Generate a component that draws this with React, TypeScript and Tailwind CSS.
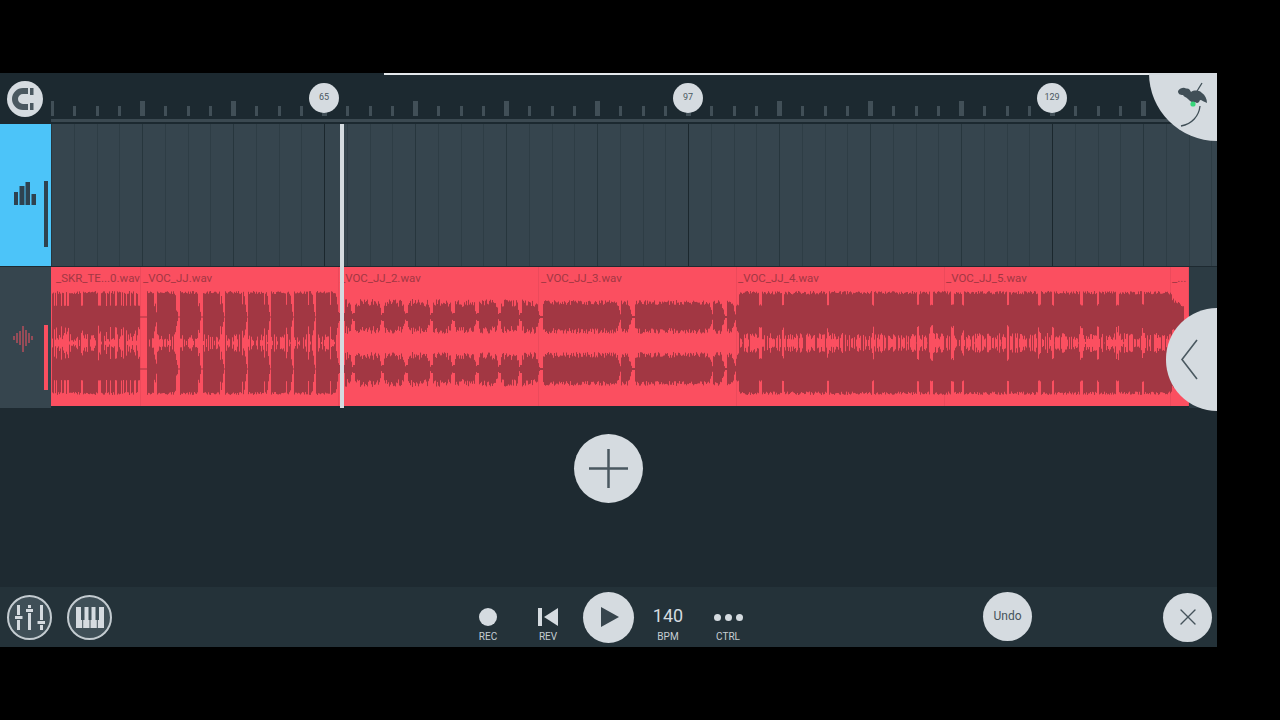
import { X } from 'lucide-react';

const CELLS = Array.from({ length: 52 }, (_, i) => i);
const BADGES: Record<number, string> = { 12: '65', 28: '97', 44: '129' };

const CLIPS = [
    { label: '_SKR_TE...0.wav', width: 'w-[90px]', pad: 'pl-[5px]' },
    { label: '_VOC_JJ.wav', width: 'w-[198px]', pad: 'pl-[2px]' },
    { label: '_VOC_JJ_2.wav', width: 'w-[200px]', pad: 'pl-[1px]' },
    { label: '_VOC_JJ_3.wav', width: 'w-[198px]', pad: 'pl-[2px]' },
    { label: '_VOC_JJ_4.wav', width: 'w-[208px]', pad: 'pl-[1px]' },
    { label: '_VOC_JJ_5.wav', width: 'w-[226px]', pad: 'pl-[1px]' },
    { label: '_...', width: 'w-[18px]', pad: 'pl-[1px]' },
];

function rand(n: number) {
    const s = Math.sin(n * 127.1 + 11.7) * 43758.5453;
    return s - Math.floor(s);
}

const BURSTS = [[147, 156], [157, 177], [180, 200], [203, 223], [225, 246], [248, 269], [271, 292], [294, 314], [316, 338]];
const SOFT = [[345, 352], [355, 381], [384, 405], [408, 430], [433, 452], [455, 476], [479, 498], [501, 519], [522, 539]];
const MID = [[543, 620], [621, 631], [635, 712], [713, 724], [727, 735]];

function inBurst(list: number[][], x: number, fade: number) {
    for (const [a, b] of list) {
        if (x >= a && x <= b) {
            return Math.min(1, (b - x) / fade + 0.2);
        }
    }
    return 0;
}

// one column of the waveform: [channel 1 top, ch1 bottom, ch2 top, ch2 bottom], in page y
function column(x: number) {
    const r = rand(x);
    const r2 = rand(x + 500);
    const spike = rand(x + 900) > 0.75 ? 9 : 0;
    let up = 0;
    let down = 0;
    if (x < 140) {
        const gate = r > 0.25 ? 1 : 0.5;
        up = (22 + r * 4) * gate;
        down = (17 + r2 * 8 + spike) * gate;
    } else if (x < 339) {
        const k = inBurst(BURSTS, x, 3);
        const gate = x % 22 < 1 ? 0.5 : 1;
        up = (23 + r * 3) * k * gate;
        down = (17 + r2 * 8 + spike) * k * gate;
        if (k === 0) { up = 0.5; down = 0.5; }
    } else if (x < 540) {
        const k = inBurst(SOFT, x, 3);
        up = (10 + r * 8) * k;
        down = (9 + r2 * 8) * k;
        if (k === 0) { up = 4; down = 4; }
    } else if (x < 736) {
        const k = inBurst(MID, x, 4);
        up = (12 + r * 5) * k;
        down = (11 + r2 * 6) * k;
        if (k === 0) { up = 1; down = 1; }
    } else if (x < 1172) {
        const gap = (x - 737) % 45 < 1.5 || rand(Math.floor(x / 3)) > 0.95;
        const k = gap ? 0.5 : 1;
        up = (22.5 + r * 3.5) * k;
        down = (16 + r2 * 7 + spike) * k;
    } else if (x < 1184) {
        up = 15 - (x - 1172) * 0.6 + r * 4;
        down = 12 - (x - 1172) * 0.5 + r2 * 4;
    }
    return [317 - up, 317 + down, 369 - down, 369 + up];
}

function wavePath() {
    let d = '';
    for (let x = 52; x < 1186; x++) {
        const [a, b, c, e] = column(x);
        d += `M${x + 0.5} ${a.toFixed(1)}V${b.toFixed(1)}M${x + 0.5} ${c.toFixed(1)}V${e.toFixed(1)}`;
    }
    return d;
}

const WAVE = wavePath();

function MagnetIcon() {
    return (
        <svg width="36" height="36" viewBox="0 0 36 36">
            <circle cx="18" cy="18" r="18" fill="#d5dbe0" />
            <path d="M21 10H16A8 8 0 0 0 16 26H21" fill="none" stroke="#4a5860" strokeWidth="6" />
            <rect x="23" y="7" width="3.5" height="7" fill="#4a5860" />
            <rect x="23" y="22" width="3.5" height="7" fill="#4a5860" />
        </svg>
    );
}

function MixerIcon() {
    return (
        <svg width="30" height="25" viewBox="0 0 30 25" fill="#d5dbe0">
            <rect x="2" y="0" width="3" height="10" />
            <rect x="0" y="11" width="7.5" height="3" />
            <rect x="2" y="15" width="3" height="10" />
            <rect x="13" y="0" width="3" height="3" />
            <rect x="11" y="4" width="7" height="3" />
            <rect x="13" y="8" width="3" height="17" />
            <rect x="25" y="0" width="3" height="15" />
            <rect x="22.5" y="16" width="7.5" height="3" />
            <rect x="25" y="20" width="3" height="5" />
        </svg>
    );
}

function PianoIcon() {
    return (
        <svg width="28" height="21" viewBox="0 0 28 21" fill="#d5dbe0">
            <path d="M0 0H5V13H6.2V21H0Z" />
            <path d="M7.2 21V13H8.5V0H12.5V13H13.5V21Z" />
            <path d="M14.5 21V13H15.5V0H19.5V13H20.8V21Z" />
            <path d="M21.8 21V13H23V0H28V21Z" />
        </svg>
    );
}

function FruitLogo() {
    return (
        <svg width="36" height="50" viewBox="1175 80 36 50">
            <path d="M1200 106C1199 116 1192 124 1181 126" fill="none" stroke="#3f4e56" strokeWidth="1.3" />
            <path d="M1194 96L1202 83" fill="none" stroke="#3f4e56" strokeWidth="1.3" />
            <path d="M1178 91C1180 88 1184 87 1186 88.5C1189 88 1190 90 1191 92C1194 90 1199 90 1202 93C1205 95 1207 99 1207 103C1204 102 1202 100 1200 100C1199 103 1197 104 1195 102C1192 103 1190 101 1188 99C1186 97 1184 97 1183 95C1180 95 1178 94 1178 91Z" fill="#414f57" />
            <circle cx="1193" cy="104" r="2.6" fill="#37d67a" />
        </svg>
    );
}

function Round({ children, className }: { children: React.ReactNode; className: string }) {
    return (
        <div className={`flex items-center justify-center rounded-full bg-[#d5dbe0] text-[#45535b] ${className}`}>
            {children}
        </div>
    );
}

function Transport({ label, children }: { label: string; children: React.ReactNode }) {
    return (
        <div className="flex h-full w-[60px] flex-col items-center">
            <div className="flex h-[43px] w-full items-center justify-center pt-[17px]">{children}</div>
            <span className="mt-[1px] text-[10px] leading-[12px] text-[#c6ced3]">{label}</span>
        </div>
    );
}

export default function App() {
    return (
        <div className="h-[720px] w-[1280px] overflow-hidden bg-black pt-[73px] font-['Roboto',sans-serif]">
            <div className="relative flex h-[574px] w-[1217px] flex-col overflow-hidden bg-[#1e2a31]">
                {/* Ruler */}
                <div className="flex h-[51px] shrink-0 bg-[#1c2930]">
                    <div className="flex w-[51px] shrink-0 items-center pl-[7px]">
                        <MagnetIcon />
                    </div>
                    <div className="flex flex-1 flex-col overflow-hidden">
                        <div className="flex h-[46px] items-end pb-[3px]">
                            {CELLS.map((i) => (
                                <div key={i} className="relative h-[15px] w-[22.75px] shrink-0">
                                    {i % 4 === 0 ? (
                                        <div className="absolute bottom-0 left-[-2px] h-[15px] w-[5px] bg-[#414f57]" />
                                    ) : (
                                        <div className="absolute bottom-0 left-[-1px] h-[10px] w-[3px] bg-[#414f57]" />
                                    )}
                                    {BADGES[i] && (
                                        <div className="absolute left-[-15px] top-[-18px] flex h-[30px] w-[30px] items-center justify-center rounded-full bg-[#d5dbe0] text-[9px] text-[#4a5860]">
                                            {BADGES[i]}
                                        </div>
                                    )}
                                </div>
                            ))}
                        </div>
                        <div className="h-[3px] bg-[#3b4951]" />
                        <div className="h-[2px] bg-[#1c2930]" />
                    </div>
                </div>

                {/* Pattern track */}
                <div className="flex h-[143px] shrink-0 border-b border-[#1e2a31]">
                    <div className="flex w-[51px] shrink-0 items-start bg-[#4cc4f9] pl-[14px] pt-[57px]">
                        <svg width="34" height="66" viewBox="0 0 34 66" fill="#2e4250">
                            <rect x="0" y="11" width="4" height="13" />
                            <rect x="5.5" y="5" width="5" height="19" />
                            <rect x="11.5" y="1" width="4.5" height="23" />
                            <rect x="17.5" y="13" width="4.5" height="11" />
                            <rect x="30" y="0" width="4" height="66" />
                        </svg>
                    </div>
                    <div className="flex flex-1 overflow-hidden bg-[#36454e]">
                        {CELLS.map((i) => (
                            <div
                                key={i}
                                className={`h-full w-[22.75px] shrink-0 border-l ${i % 16 === 12 ? 'border-[#1b272d]' : i % 4 === 0 ? 'border-[#27363d]' : 'border-[#2e3d45]'}`}
                            />
                        ))}
                    </div>
                </div>

                {/* Audio track */}
                <div className="flex h-[141px] shrink-0">
                    <div className="flex w-[51px] shrink-0 items-start bg-[#36454e] pl-[13px] pt-[58px]">
                        <svg width="35" height="65" viewBox="0 0 35 65" stroke="#c9505d" strokeWidth="1.3">
                            <path d="M1 11V15M4 8V18M7 6V20M10 1V27M13 5V21M16 8V18M19 11V15" />
                            <rect x="31" y="0" width="4" height="65" fill="#fb4f60" stroke="none" />
                        </svg>
                    </div>
                    <div className="relative flex h-[139px] w-[1138px] bg-[#fb4f60]">
                        {CLIPS.map((c) => (
                            <div key={c.label} className={`h-full shrink-0 border-r border-[#ec4a5b] ${c.width}`}>
                                <div className={`whitespace-nowrap pt-[4px] text-[11.5px] leading-[15px] text-[#a23743] ${c.pad}`}>
                                    {c.label}
                                </div>
                            </div>
                        ))}
                        <svg className="absolute inset-0" width="1138" height="139" viewBox="51 267 1138 139">
                            <path d={WAVE} stroke="#a23743" strokeWidth="1" fill="none" />
                        </svg>
                    </div>
                    <div className="flex-1 bg-[#2c3b43]" />
                </div>

                {/* Empty area with the add button */}
                <div className="flex flex-1 justify-center pt-[26px]">
                    <Round className="h-[69px] w-[69px]">
                        <svg width="39" height="39" viewBox="0 0 39 39" stroke="#4a5860" strokeWidth="2.5">
                            <path d="M0 19.5H39M19.5 0V39" />
                        </svg>
                    </Round>
                </div>

                {/* Bottom bar */}
                <div className="flex h-[60px] shrink-0 items-center bg-[#243239] pl-[7px]">
                    <div className="flex h-[45px] w-[45px] items-center justify-center rounded-full border-2 border-[#c3cbd0] bg-[#3f4f57]">
                        <MixerIcon />
                    </div>
                    <div className="ml-[15px] flex h-[45px] w-[45px] items-center justify-center rounded-full border-2 border-[#c3cbd0] bg-[#3f4f57]">
                        <PianoIcon />
                    </div>
                    <div className="ml-[346px] flex h-full items-start">
                        <Transport label="REC">
                            <div className="h-[18px] w-[18px] rounded-full bg-[#d5dbe0]" />
                        </Transport>
                        <Transport label="REV">
                            <svg width="20" height="18" viewBox="0 0 20 18" fill="#d5dbe0">
                                <rect x="0" y="0" width="4" height="18" />
                                <path d="M20 0V18L6 9Z" />
                            </svg>
                        </Transport>
                        <div className="flex h-full w-[60px] items-center justify-center">
                            <Round className="h-[51px] w-[51px] shrink-0">
                                <svg width="18" height="20" viewBox="0 0 18 20" className="ml-[3px]" fill="#37454d">
                                    <path d="M0 0L18 10L0 20Z" />
                                </svg>
                            </Round>
                        </div>
                        <Transport label="BPM">
                            <span className="mb-[2px] text-[18px] leading-[20px] text-[#d5dbe0]">140</span>
                        </Transport>
                        <Transport label="CTRL">
                            <div className="flex gap-[4px]">
                                <div className="h-[7px] w-[7px] rounded-full bg-[#d5dbe0]" />
                                <div className="h-[7px] w-[7px] rounded-full bg-[#d5dbe0]" />
                                <div className="h-[7px] w-[7px] rounded-full bg-[#d5dbe0]" />
                            </div>
                        </Transport>
                    </div>
                    <Round className="mb-[2px] ml-[225px] h-[49px] w-[49px] text-[12px]">Undo</Round>
                    <Round className="ml-[131px] h-[49px] w-[49px]">
                        <X size={28} strokeWidth={1.2} />
                    </Round>
                </div>

                {/* Overlays */}
                <div className="absolute left-[384px] top-0 h-[2px] w-[766px] bg-[#e4e8eb]" />
                <div className="absolute left-[340px] top-[51px] h-[284px] w-[4px] bg-[#d5dbe0]" />
                <div className="absolute right-0 top-0 flex h-[68px] w-[68px] items-start justify-end rounded-bl-[68px] bg-[#d5dbe0] pr-[6px] pt-[7px]">
                    <FruitLogo />
                </div>
                <div className="absolute right-0 top-[235px] flex h-[103px] w-[51px] items-center rounded-l-[52px] bg-[#d5dbe0] pl-[15px]">
                    <svg width="17" height="41" viewBox="0 0 17 41" fill="none" stroke="#4a5860" strokeWidth="1.6">
                        <path d="M16 1L1 20.5L16 40" />
                    </svg>
                </div>
            </div>
        </div>
    );
}
